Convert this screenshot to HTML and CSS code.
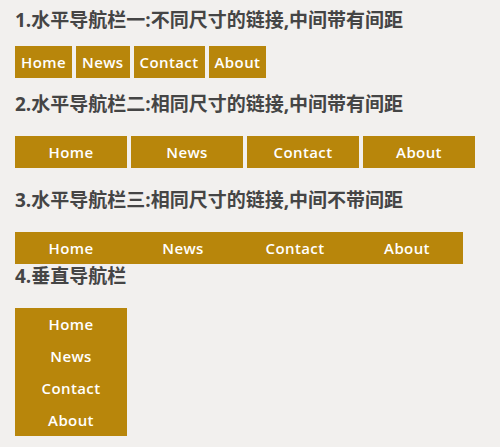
FILE: index.html
```html
<!DOCTYPE html>
<html lang="zh">
<head>
<meta charset="utf-8">
<title>导航栏</title>
<link rel="stylesheet" href="styles.css">
</head>
<body>
<div class="page">
  <h2 class="title t1">1.水平导航栏一:不同尺寸的链接,中间带有间距</h2>
  <ul class="nav nav-auto">
    <li><a href="#">Home</a></li>
    <li><a href="#">News</a></li>
    <li><a href="#">Contact</a></li>
    <li><a href="#">About</a></li>
  </ul>
  <h2 class="title t2">2.水平导航栏二:相同尺寸的链接,中间带有间距</h2>
  <ul class="nav nav-fixed">
    <li><a href="#">Home</a></li>
    <li><a href="#">News</a></li>
    <li><a href="#">Contact</a></li>
    <li><a href="#">About</a></li>
  </ul>
  <h2 class="title t3">3.水平导航栏三:相同尺寸的链接,中间不带间距</h2>
  <ul class="nav nav-joined">
    <li><a href="#">Home</a></li>
    <li><a href="#">News</a></li>
    <li><a href="#">Contact</a></li>
    <li><a href="#">About</a></li>
  </ul>
  <h2 class="title t4">4.垂直导航栏</h2>
  <ul class="nav nav-vertical">
    <li><a href="#">Home</a></li>
    <li><a href="#">News</a></li>
    <li><a href="#">Contact</a></li>
    <li><a href="#">About</a></li>
  </ul>
</div>
</body>
</html>
```
FILE: styles.css
```css
html, body {
  margin: 0;
  padding: 0;
  background: #f2f0ee;
}

.page {
  display: flex;
  flex-direction: column;
  align-items: flex-start;
  padding: 8px 15px 0;
  font-family: "Open Sans", "Noto Sans CJK SC", sans-serif;
}

.title {
  margin: 0;
  font-size: 19px;
  line-height: 24px;
  font-weight: 700;
  color: #454545;
}

.t1 { margin-bottom: 14px; }
.t2 { margin-bottom: 20px; }
.t3 { margin-bottom: 20px; }
.t4 { margin-bottom: 20px; }

.nav {
  list-style: none;
  margin: 0;
  padding: 0;
  display: flex;
}

.nav a {
  display: block;
  height: 32px;
  line-height: 32px;
  background: #b8860b;
  color: #ffffff;
  font-size: 15px;
  font-weight: 600;
  letter-spacing: 0.4px;
  text-decoration: none;
  text-align: center;
}

.nav-auto {
  gap: 4px;
  margin-bottom: 14px;
}
.nav-auto a {
  padding: 0 6px;
}

.nav-fixed {
  gap: 4px;
  margin-bottom: 20px;
}
.nav-fixed a {
  width: 112px;
}

.nav-joined a {
  width: 112px;
}

.nav-vertical {
  flex-direction: column;
}
.nav-vertical a {
  width: 112px;
}
```
